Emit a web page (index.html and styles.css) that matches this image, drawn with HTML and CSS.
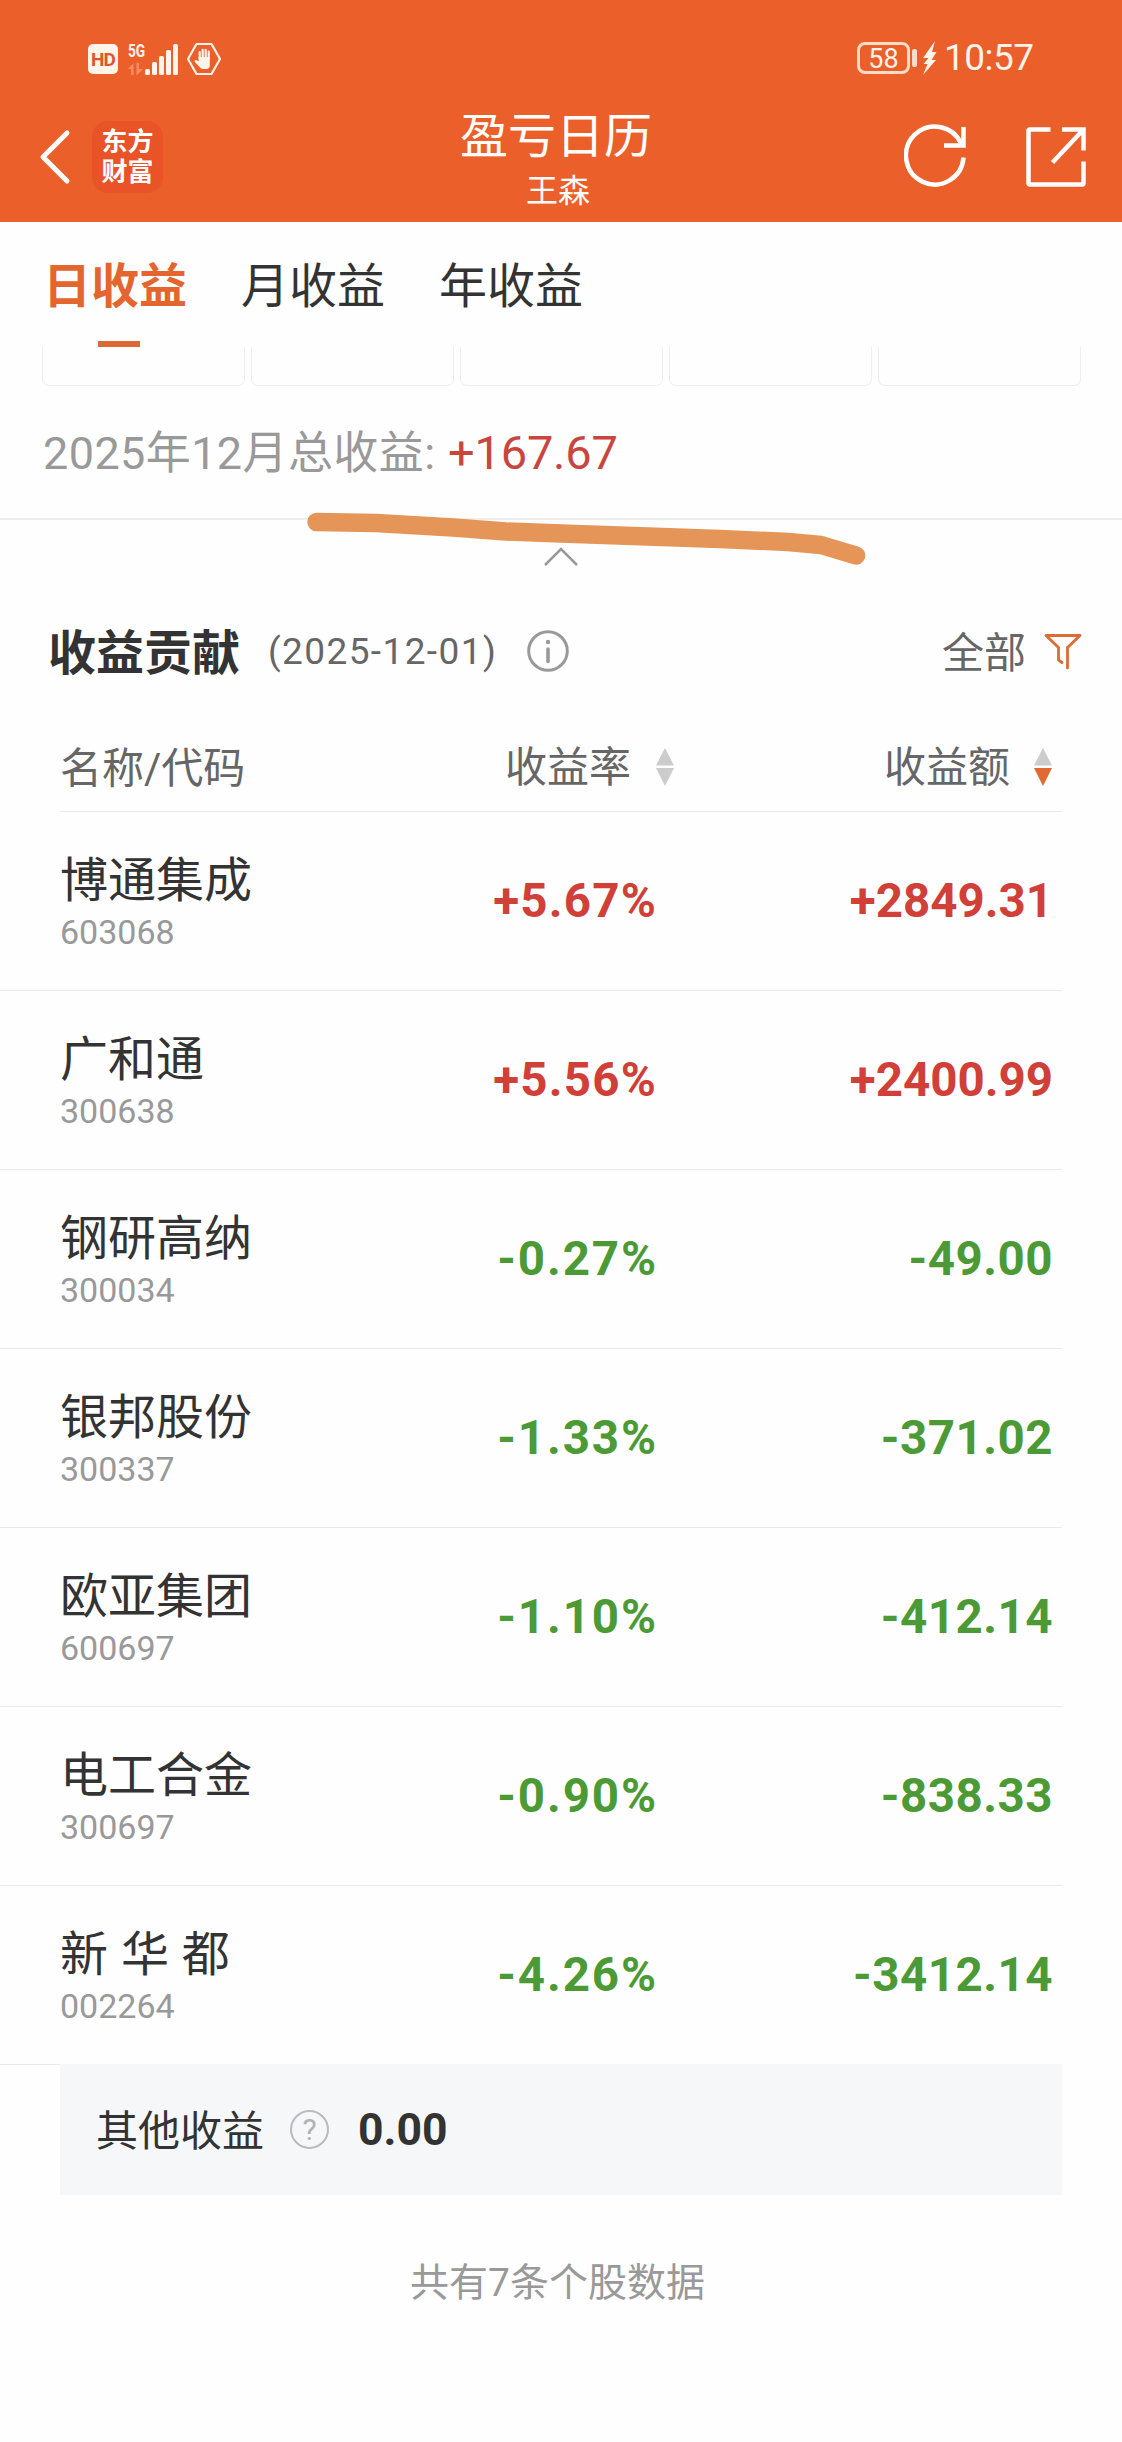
FILE: index.html
```
<!DOCTYPE html>
<html lang="zh-CN">
<head>
    <meta charset="utf-8">
    <title>盈亏日历</title>
    <link rel="stylesheet" href="styles.css">
</head>
<body>
    <header class="top">
        <div class="status">
            <div class="status-left">
                <span class="hd">HD</span>
                <div class="net">
                    <span class="net-type">5G</span>
                    <svg class="net-arrows" width="15" height="12" viewBox="0 0 15 12"><path d="M0 6 L5.500 0 V12 H3 V6 Z M8.500 0 H11 V6 H15 L9 12 H8.500 Z" fill="#ff8a5c"/></svg>
                </div>
                <svg class="bars" width="34" height="34" viewBox="0 0 34 34">
                    <g fill="#fff3ea">
                        <rect x="0" y="26" width="5" height="6" rx="1.500"/>
                        <rect x="7" y="19" width="5" height="13" rx="1.500"/>
                        <rect x="14" y="13" width="5" height="19" rx="1.500"/>
                        <rect x="21" y="7" width="5" height="25" rx="1.500"/>
                        <rect x="28" y="1" width="5" height="31" rx="1.500"/>
                    </g>
                </svg>
                <svg class="hand" width="36" height="34" viewBox="0 0 36 34">
                    <path d="M10.500 2 H25.500 L34 17 L25.500 32 H10.500 L2 17 Z" fill="none" stroke="#fff3ea" stroke-width="2.200" stroke-linejoin="round"/>
                    <path d="M13.700 17 V10 M16.700 16 V7.800 M19.700 16 V7.800 M22.700 17 V9.500" stroke="#fff3ea" stroke-width="2.200" stroke-linecap="round"/>
                    <path d="M12.600 15 H23.800 V23 Q23.800 27 20.500 27 H17 Q15 27 13.500 25 L8.500 19.500 Q8.500 17.500 10.500 18 L12.600 19.500 Z" fill="#fff3ea"/>
                </svg>
            </div>
            <div class="status-right">
                <span class="battery">58</span>
                <span class="nub"></span>
                <svg class="bolt" width="16" height="36" viewBox="0 0 16 36"><path d="M13 1 L1 18 H6.500 L1.500 24 H5.500 L1 35 L14 20 H9.500 L14.500 12 H10 Z" fill="#fff3ea"/></svg>
                <span class="clock">10:57</span>
            </div>
        </div>
        <div class="nav">
            <div class="nav-left">
                <svg width="34" height="58" viewBox="0 0 34 58"><path d="M29 5 L5 29 L29 53" fill="none" stroke="#fff" stroke-width="5" stroke-linecap="round" stroke-linejoin="round"/></svg>
                <div class="logo">东方<br>财富</div>
            </div>
            <div class="nav-title">
                <div class="title">盈亏日历</div>
                <div class="user">王森</div>
            </div>
            <div class="nav-right">
                <svg width="64" height="66" viewBox="0 0 64 66">
                    <path d="M59.500 33.500 A28.800 29 0 1 1 57 19.500" fill="none" stroke="#fff" stroke-width="4.500"/>
                    <path d="M59.500 3 V21.500 H40" fill="none" stroke="#fff" stroke-width="4.500"/>
                </svg>
                <svg width="60" height="60" viewBox="0 0 60 60">
                    <path d="M24.500 2.500 H4 Q2.500 2.500 2.500 4 V56 Q2.500 57.500 4 57.500 H56 Q57.500 57.500 57.500 56 V34.500" fill="none" stroke="#fff" stroke-width="4.500"/>
                    <path d="M36 2.500 H57.500 V23.500 M57 3 L26.500 35.500" fill="none" stroke="#fff" stroke-width="4.500"/>
                </svg>
            </div>
        </div>
    </header>

    <nav class="tabs">
        <div class="tab active">日收益</div>
        <div class="tab">月收益</div>
        <div class="tab">年收益</div>
    </nav>

    <div class="days">
        <div class="day"></div>
        <div class="day"></div>
        <div class="day"></div>
        <div class="day"></div>
        <div class="day"></div>
    </div>
    <div class="total">
        <span class="total-label">2025年12月总收益:</span>
        <span class="total-value">+167.67</span>
    </div>

    <div class="fold">
        <svg width="36" height="22" viewBox="0 0 36 22"><path d="M2 19 L18 3 L34 19" fill="none" stroke="#999" stroke-width="2.500"/></svg>
        <!-- marker line drawn over the divider -->
        <svg class="marker" width="570" height="60" viewBox="0 0 570 60"><path d="M16.500 12 L76 13 L153 17.500 L206 21.500 L261 23.500 L420 29 L488 32 L521 35 L556 45.500" fill="none" stroke="#e59557" stroke-width="18.500" stroke-linecap="round" stroke-linejoin="round"/></svg>
    </div>

    <div class="section-head">
        <div class="section-title">收益贡献</div>
        <div class="section-date">(2025-12-01)</div>
        <svg class="info" width="42" height="42" viewBox="0 0 42 42">
            <circle cx="21" cy="21" r="19.300" fill="none" stroke="#999" stroke-width="3"/>
            <circle cx="21" cy="12" r="2.200" fill="#999"/>
            <path d="M21 19 V31.500" stroke="#999" stroke-width="3.600" stroke-linecap="round"/>
        </svg>
        <div class="filter">
            <span>全部</span>
            <svg width="38" height="37" viewBox="0 0 38 37"><path d="M18 29.500 L14.500 27 V14.500 L2 2.500 H36 L23.500 14.500 V35" fill="none" stroke="#dc6b36" stroke-width="2.800" stroke-linejoin="round" stroke-linecap="round"/></svg>
        </div>
    </div>

    <div class="cols">
        <div class="col-name">名称/代码</div>
        <div class="col-rate">收益率
            <svg class="sort" width="18" height="38" viewBox="0 0 18 38"><path d="M9 0 L18 17.500 H0 Z M0 20 H18 L9 38 Z" fill="#ccc"/></svg>
        </div>
        <div class="col-sum">收益额
            <svg class="sort" width="18" height="38" viewBox="0 0 18 38"><path d="M9 0 L18 17.500 H0 Z" fill="#ccc"/><path d="M0 20 H18 L9 38 Z" fill="#e06a34"/></svg>
        </div>
    </div>

    <div class="rows">
        <div class="row up">
            <div class="stock"><div class="name">博通集成</div><div class="code">603068</div></div>
            <div class="rate">+5.67%</div>
            <div class="sum">+2849.31</div>
        </div>
        <div class="row up">
            <div class="stock"><div class="name">广和通</div><div class="code">300638</div></div>
            <div class="rate">+5.56%</div>
            <div class="sum">+2400.99</div>
        </div>
        <div class="row down">
            <div class="stock"><div class="name">钢研高纳</div><div class="code">300034</div></div>
            <div class="rate">-0.27%</div>
            <div class="sum">-49.00</div>
        </div>
        <div class="row down">
            <div class="stock"><div class="name">银邦股份</div><div class="code">300337</div></div>
            <div class="rate">-1.33%</div>
            <div class="sum">-371.02</div>
        </div>
        <div class="row down">
            <div class="stock"><div class="name">欧亚集团</div><div class="code">600697</div></div>
            <div class="rate">-1.10%</div>
            <div class="sum">-412.14</div>
        </div>
        <div class="row down">
            <div class="stock"><div class="name">电工合金</div><div class="code">300697</div></div>
            <div class="rate">-0.90%</div>
            <div class="sum">-838.33</div>
        </div>
        <div class="row down">
            <div class="stock"><div class="name">新 华 都</div><div class="code">002264</div></div>
            <div class="rate">-4.26%</div>
            <div class="sum">-3412.14</div>
        </div>
    </div>

    <div class="other">
        <span class="other-label">其他收益</span>
        <span class="help">?</span>
        <span class="other-value">0.00</span>
    </div>
    <div class="count">共有7条个股数据</div>
</body>
</html>
```

FILE: styles.css
```
* {
    box-sizing: border-box;
}
body {
    margin: 0;
    width: 1122px;
    min-height: 2442px;
    background: #fefefe;
    color: #333;
    font-family: Roboto, "Noto Sans CJK SC", sans-serif;
}
svg {
    display: block;
    flex: none;
}

/* header */
.top {
    height: 222px;
    background: #eb5f2b;
    color: #fff;
}
.status {
    display: flex;
    justify-content: space-between;
    height: 116px;
    padding: 0 88px;
    color: #fff3ea;
}
.status-left, .status-right {
    display: flex;
    align-items: center;
    height: 118px;
}
.hd {
    width: 30px;
    height: 30px;
    border-radius: 5px;
    background: #fff3ea;
    color: #d9592b;
    font-size: 19px;
    font-weight: bold;
    line-height: 31px;
    text-align: center;
    letter-spacing: -1px;
}
.net {
    width: 17px;
    height: 32px;
    margin-left: 10px;
}
.net-type {
    display: block;
    font-size: 18px;
    font-weight: bold;
    line-height: 15px;
    transform: scaleX(0.760);
    transform-origin: left;
}
.net-arrows {
    margin-top: 5px;
}
.bars {
    margin-top: 1px;
}
.hand {
    margin-left: 7px;
}
.status-right {
    height: 116px;
}
.battery {
    width: 53px;
    height: 32px;
    border: 3px solid #ffdcc8;
    border-radius: 8px;
    font-size: 27px;
    line-height: 28px;
    text-align: center;
}
.nub {
    width: 5px;
    height: 18px;
    margin: 0 5px 0 2px;
    border-radius: 2px;
    background: #ffdcc8;
}
.clock {
    margin-left: 6px;
    font-size: 37px;
    line-height: 40px;
    width: 90px;
    letter-spacing: -0.500px;
}
.nav {
    display: grid;
    grid-template-columns: 420px 1fr 420px;
    height: 106px;
}
.nav-left {
    display: flex;
    align-items: center;
    height: 82px;
    padding-left: 38px;
}
.logo {
    width: 71px;
    height: 72px;
    margin-left: 20px;
    padding-top: 6px;
    border-radius: 16px;
    background: #e95328;
    font-size: 26px;
    font-weight: bold;
    line-height: 30px;
    text-align: center;
}
.nav-title {
    padding-right: 10px;
    text-align: center;
}
.title {
    height: 50px;
    font-size: 48px;
    line-height: 42px;
}
.user {
    padding-left: 4px;
    font-size: 32px;
    line-height: 50px;
}
.nav-right {
    display: flex;
    align-items: center;
    justify-content: flex-end;
    gap: 58px;
    height: 82px;
    padding-right: 36px;
}

/* tabs */
.tabs {
    display: flex;
    gap: 54px;
    height: 125px;
    padding-left: 43px;
}
.tab {
    display: flex;
    flex-direction: column;
    align-items: center;
    font-size: 48px;
    line-height: 129px;
}
.tab.active {
    color: #e4652d;
    font-weight: bold;
}
.tab.active::after {
    content: "";
    width: 42px;
    height: 6px;
    margin-top: -10px;
    margin-left: 8px;
    background: #dc6836;
}

/* calendar bottom */
.days {
    display: grid;
    grid-template-columns: repeat(5, 1fr);
    gap: 6px;
    padding: 0 41px 0 42px;
}
.day {
    height: 39px;
    border: 1px solid #eee;
    border-top: none;
    border-radius: 0 0 7px 7px;
}
.total {
    display: flex;
    height: 134px;
    padding-left: 43px;
    border-bottom: 2px solid #eee;
    font-size: 45px;
    line-height: 135px;
}
.total-label {
    width: 405px;
    color: #999;
    letter-spacing: 0.400px;
    white-space: nowrap;
}
.total-value {
    color: #c8463e;
    font-size: 47px;
    letter-spacing: -0.200px;
    line-height: 133px;
}
.fold {
    position: relative;
    display: flex;
    justify-content: center;
    height: 72px;
    padding-top: 26px;
}
.marker {
    position: absolute;
    left: 300px;
    top: -10px;
}

/* section */
.section-head {
    display: flex;
    align-items: center;
    height: 118px;
    padding: 0 40px 0 48px;
}
.section-title {
    padding-bottom: 4px;
    font-size: 48px;
    font-weight: bold;
}
.section-date {
    margin-left: 28px;
    width: 231px;
    color: #666;
    font-size: 37px;
    letter-spacing: 1.400px;
    white-space: nowrap;
}
.info {
    margin-left: 28px;
}
.filter {
    display: flex;
    align-items: center;
    gap: 18px;
    margin-left: auto;
    color: #666;
    font-size: 42px;
}
.filter span {
    padding-bottom: 4px;
}
.cols {
    display: flex;
    height: 102px;
    margin: 0 60px;
    border-bottom: 1px solid #eaeaea;
    color: #666;
    font-size: 42px;
    line-height: 117px;
}
.col-name {
    width: 445px;
}
.col-rate {
    display: flex;
    align-items: center;
    width: 379px;
    height: 114px;
    gap: 25px;
}
.col-sum {
    display: flex;
    align-items: center;
    height: 114px;
    gap: 24px;
}

/* rows */
.row {
    display: flex;
    width: 1062px;
    height: 179px;
    padding-left: 60px;
    border-bottom: 1px solid #eaeaea;
}
.stock {
    width: 360px;
    padding-top: 38px;
}
.name {
    font-size: 48px;
    line-height: 61px;
    white-space: pre;
    word-spacing: 1px;
}
.code {
    color: #999;
    font-size: 34px;
    line-height: 42px;
}
.rate, .sum {
    font-size: 47.500px;
    font-weight: bold;
    line-height: 179px;
    text-align: right;
}
.rate {
    width: 237px;
    letter-spacing: 1.200px;
}
.sum {
    width: 396px;
}
.up .rate, .up .sum {
    color: #d14038;
}
.down .rate, .down .sum {
    color: #4c9a35;
}
.down .rate {
    width: 238px;
    letter-spacing: 1.900px;
}
.down .sum {
    width: 395px;
    letter-spacing: 0.500px;
}

/* bottom */
.other {
    display: flex;
    align-items: center;
    height: 131px;
    margin: -1px 60px 0;
    padding-left: 36px;
    background: #f6f7f9;
}
.other-label {
    padding-bottom: 4px;
    font-size: 42px;
}
.help {
    width: 39px;
    height: 39px;
    margin-left: 26px;
    border: 2px solid #b9bbc0;
    border-radius: 50%;
    color: #b0b2b8;
    font-size: 30px;
    line-height: 36px;
    text-align: center;
}
.other-value {
    margin-left: 29px;
    font-size: 44.500px;
    font-weight: bold;
}
.count {
    padding-right: 7px;
    color: #999;
    font-size: 39px;
    line-height: 176px;
    text-align: center;
}
```
